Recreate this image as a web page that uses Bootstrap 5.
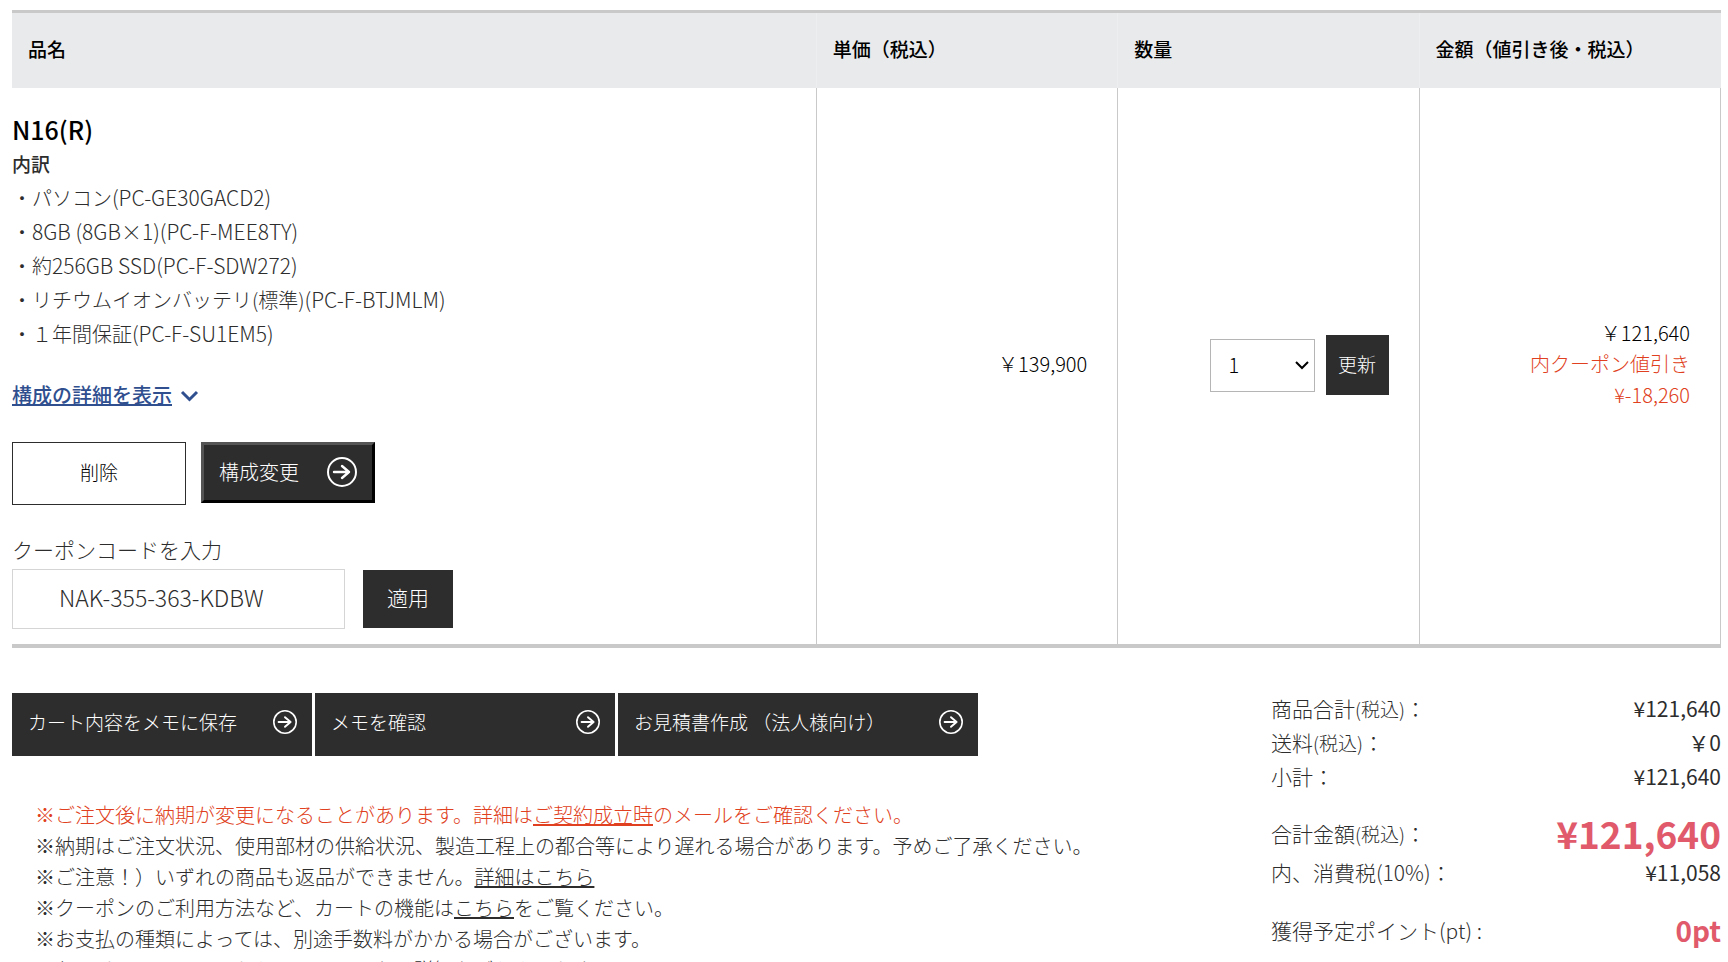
<!DOCTYPE html>
<html lang="ja">
<head>
<meta charset="utf-8">
<meta name="viewport" content="width=device-width, initial-scale=1">
<title>ショッピングカート</title>
<link href="https://cdn.jsdelivr.net/npm/bootstrap@5.3.0/dist/css/bootstrap.min.css" rel="stylesheet">
<style>
  body { font-family: "Noto Sans CJK JP", sans-serif; font-weight: 300; font-size: 20px; line-height: 31px; color: #2d2d2d; background: #fff; }
  .page { padding: 10px 7px 0 12px; }
  .cart { table-layout: fixed; border-top: 3px solid #c9c9c9; border-bottom: 4px solid #c9c9c9; color: inherit; }
  .cart th { width: 17.64%; padding: 21px 16px 24px; background: #e9eaeb; border: 0; border-left: 1px solid #edeeef; color: #000; font-size: 19px; font-weight: 500; line-height: 30px; }
  .cart th:first-child { width: 47.08%; border-left: 0; }
  .cart td { border: 0; border-left: 1px solid #c9c9c9; color: #000; padding: 0 30px 2px 16px; }
  .cart td:first-child { border-left: 0; color: inherit; padding: 23px 0 15px; }
  .cart td:last-child { border-right: 1px solid #c9c9c9; }
  .cart .price { padding-bottom: 6px; }
  .item-name { font-size: 25px; line-height: 36px; font-weight: 500; color: #000; }
  .parts { line-height: 34px; }
  .parts-title { font-size: 19px; font-weight: 500; }
  .part-no { font-size: 21px; line-height: 1; }
  .detail-link { color: #2f4f8f; font-weight: 500; }
  .coral { color: #e04020; }
  .coral a, .notes a { color: inherit; }
  .dark-btn { background: #2d2d2d; color: #fff; border-radius: 0; border: 0; font-size: 19px; font-weight: 300; line-height: 31px; }
  .dark-btn:hover { background: #444; color: #fff; }
  .item-actions { gap: 15px; }
  .delete-btn { width: 174px; height: 63px; padding-bottom: 8px; border: 1px solid #2d2d2d; border-radius: 0; font-size: 19px; font-weight: 300; background: #fff; color: #000; }
  .change-btn { width: 174px; height: 61px; border: 3px solid; border-color: #555 #000 #000 #555; padding: 0 15px 2px; font-size: 20px; }
  .coupon-label { font-size: 21px; line-height: 32px; padding-bottom: 4px; }
  .coupon-row { gap: 18px; }
  .coupon { width: 333px; height: 60px; border: 1px solid #d5d5d5; border-radius: 0; padding: 0 46px 4px; font-size: 23px; font-weight: 300; color: #2d2d2d; }
  .apply-btn { width: 90px; height: 58px; padding: 0 0 4px; font-size: 21px; }
  .qty-row { gap: 11px; }
  .qty { width: 105px; height: 53px; border: 1px solid #b5b5b5; border-radius: 0; padding: 0 18px; font-size: 20px; font-weight: 300; color: #000; background-position: right 5px center; background-size: 14px 14px;
    background-image: url("data:image/svg+xml,%3Csvg xmlns='http://www.w3.org/2000/svg' viewBox='0 0 14 14'%3E%3Cpath d='M1 4l6 6 6-6' fill='none' stroke='%23000' stroke-width='2'/%3E%3C/svg%3E"); }
  .update-btn { width: 63px; height: 60px; padding: 0 0 4px; }
  .memo-row { gap: 3px; }
  .memo-btn { width: 300px; height: 63px; padding: 0 15px 6px 16px; }
  .quote-btn { width: 360px; }
  .actions-area { padding-top: 45px; }
  .notes { padding: 43px 23px 0; }
  .totals { width: 450px; padding-top: 43px; line-height: 34px; font-size: 21px; }
  .totals .tax { font-size: 19px; line-height: 1; }
  .amount { font-weight: 400; }
  .total-row { margin-top: 18px; }
  .total-price { font-size: 37px; font-weight: 700; color: #e05a6b; line-height: 44px; }
  .points { font-size: 28px; font-weight: 700; color: #e05a6b; line-height: 34px; }
</style>
</head>
<body>
<svg class="d-none">
  <symbol id="arrow" viewBox="0 0 30 30">
    <circle cx="15" cy="15" r="14" fill="none" stroke="#fff" stroke-width="2"/>
    <path d="M7 15h15M15 9l7 6-7 6" fill="none" stroke="#fff" stroke-width="2.400" stroke-linecap="round" stroke-linejoin="round"/>
  </symbol>
</svg>
<main class="page">
  <table class="table cart align-middle mb-0">
    <thead>
      <tr><th scope="col">品名</th><th scope="col">単価（税込）</th><th scope="col">数量</th><th scope="col">金額（値引き後・税込）</th></tr>
    </thead>
    <tbody>
      <tr>
        <td>
          <h2 class="item-name mb-0">N16(R)</h2>
          <div class="parts">
            <div class="parts-title">内訳</div>
            <ul class="list-unstyled mb-0">
              <li>・パソコン<span class="part-no">(PC-GE30GACD2)</span></li>
              <li>・<span class="part-no">8GB (8GB×1)(PC-F-MEE8TY)</span></li>
              <li>・約<span class="part-no">256GB SSD(PC-F-SDW272)</span></li>
              <li>・リチウムイオンバッテリ(標準)<span class="part-no">(PC-F-BTJMLM)</span></li>
              <li>・１年間保証<span class="part-no">(PC-F-SU1EM5)</span></li>
            </ul>
          </div>
          <div class="d-flex align-items-center gap-2 mt-4 pt-1 mb-3">
            <a href="#" class="detail-link">構成の詳細を表示</a>
            <svg width="22" height="18" viewBox="0 0 22 18"><path d="M2 6l7.500 7.500 7.500-7.500" fill="none" stroke="#2f4f8f" stroke-width="3"/></svg>
          </div>
          <div class="d-flex align-items-start pt-3 item-actions">
            <button type="button" class="btn delete-btn">削除</button>
            <button type="button" class="btn dark-btn change-btn d-flex align-items-center justify-content-between">構成変更<svg width="30" height="30"><use href="#arrow"/></svg></button>
          </div>
          <form class="mt-4 pt-1">
            <label for="coupon" class="coupon-label d-block">クーポンコードを入力</label>
            <div class="d-flex align-items-center coupon-row">
              <input id="coupon" type="text" class="form-control coupon" value="NAK-355-363-KDBW">
              <button type="button" class="btn dark-btn apply-btn">適用</button>
            </div>
          </form>
        </td>
        <td class="text-end price">￥139,900</td>
        <td>
          <div class="d-flex justify-content-end align-items-center qty-row">
            <select class="form-select qty" aria-label="数量"><option>1</option><option>2</option><option>3</option></select>
            <button type="button" class="btn dark-btn update-btn">更新</button>
          </div>
        </td>
        <td class="text-end price">￥121,640<div class="coral">内クーポン値引き<br>¥-18,260</div></td>
      </tr>
    </tbody>
  </table>

  <div class="d-flex justify-content-between align-items-start">
    <div class="actions-area">
      <div class="d-flex memo-row">
        <button type="button" class="btn dark-btn memo-btn d-flex align-items-center justify-content-between">カート内容をメモに保存<svg width="24" height="24"><use href="#arrow"/></svg></button>
        <button type="button" class="btn dark-btn memo-btn d-flex align-items-center justify-content-between">メモを確認<svg width="24" height="24"><use href="#arrow"/></svg></button>
        <button type="button" class="btn dark-btn memo-btn quote-btn d-flex align-items-center justify-content-between">お見積書作成 （法人様向け）<svg width="24" height="24"><use href="#arrow"/></svg></button>
      </div>
      <div class="notes">
        <div class="coral">※ご注文後に納期が変更になることがあります。詳細は<a href="#">ご契約成立時</a>のメールをご確認ください。</div>
        <div>※納期はご注文状況、使用部材の供給状況、製造工程上の都合等により遅れる場合があります。予めご了承ください。</div>
        <div>※ご注意！）いずれの商品も返品ができません。<a href="#">詳細はこちら</a></div>
        <div>※クーポンのご利用方法など、カートの機能は<a href="#">こちら</a>をご覧ください。</div>
        <div>※お支払の種類によっては、別途手数料がかかる場合がございます。</div>
        <div>※お届けについてはこちらのページにある詳細をごらんください。</div>
      </div>
    </div>
    <div class="totals">
      <div class="d-flex justify-content-between"><span>商品合計<span class="tax">(税込)</span>：</span><span class="amount">¥121,640</span></div>
      <div class="d-flex justify-content-between"><span>送料<span class="tax">(税込)</span>：</span><span class="amount">￥0</span></div>
      <div class="d-flex justify-content-between"><span>小計：</span><span class="amount">¥121,640</span></div>
      <div class="d-flex justify-content-between align-items-center total-row"><span>合計金額<span class="tax">(税込)</span>：</span><span class="total-price">¥121,640</span></div>
      <div class="d-flex justify-content-between"><span>内、消費税(10%)：</span><span class="amount">¥11,058</span></div>
      <div class="d-flex justify-content-between align-items-center mt-4"><span>獲得予定ポイント(pt) :</span><span class="points">0pt</span></div>
    </div>
  </div>
</main>
<script src="https://cdn.jsdelivr.net/npm/bootstrap@5.3.0/dist/js/bootstrap.bundle.min.js"></script>
</body>
</html>
